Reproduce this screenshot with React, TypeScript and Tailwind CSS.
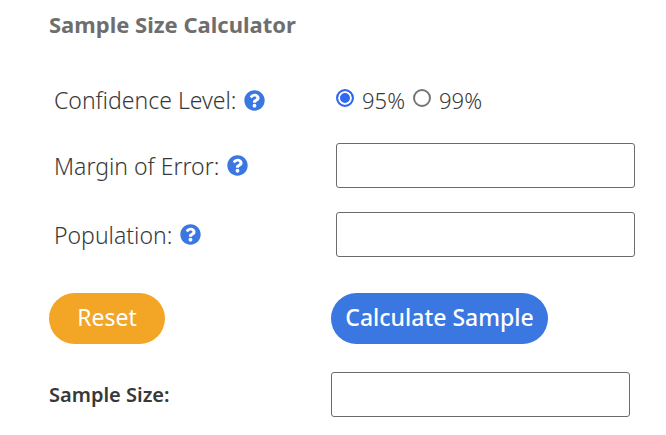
import { useState } from "react";
import type { ReactNode } from "react";
import { FaQuestionCircle } from "react-icons/fa";

function HelpButton({ topic }: { topic: string }) {
  return (
    <button type="button" aria-label={`Help: ${topic}`} className="shrink-0 text-[#3a77e0]">
      <FaQuestionCircle size={21} />
    </button>
  );
}

function LabelCell({ topic, children }: { topic: string; children: ReactNode }) {
  return (
    <div className="flex items-center gap-2 whitespace-nowrap text-[23px] leading-8">
      {children}
      <HelpButton topic={topic} />
    </div>
  );
}

const inputClass =
  "block h-[45px] w-full rounded-[3px] border border-[#6b6b6b] bg-white px-3 text-[22px] outline-none focus:border-[#3a77e0]";

function Radio({ value, checked, onSelect }: { value: string; checked: boolean; onSelect: (value: string) => void }) {
  return (
    <label className="flex items-center gap-2 text-[22px] leading-8">
      <input
        type="radio"
        name="confidence"
        value={value}
        checked={checked}
        onChange={() => onSelect(value)}
        className="mb-1 size-[18px] appearance-none rounded-full border-2 border-[#767676] bg-white checked:border-[#3267f0] checked:bg-[#3267f0] checked:shadow-[inset_0_0_0_2px_white]"
      />
      {value}%
    </label>
  );
}

export default function App() {
  const [confidence, setConfidence] = useState("95");
  const [margin, setMargin] = useState("");
  const [population, setPopulation] = useState("");
  const [result, setResult] = useState("");

  const reset = () => {
    setConfidence("95");
    setMargin("");
    setPopulation("");
    setResult("");
  };

  const calculate = () => {
    const z = confidence === "95" ? 1.96 : 2.576;
    const e = Number(margin) / 100;
    const n = Number(population);
    if (!e) return;
    const base = (z * z * 0.25) / (e * e);
    setResult(String(Math.ceil(n ? base / (1 + (base - 1) / n) : base)));
  };

  return (
    <main className="min-h-screen bg-white pt-2 pr-[31px] pb-[18px] pl-[49px] font-['Noto_Sans',sans-serif] text-[#383838]">
      <h1 className="text-[22px] leading-8 font-bold text-[#6e6e6e]">Sample Size Calculator</h1>
      <form
        onSubmit={(event) => {
          event.preventDefault();
          calculate();
        }}
      >
        <div className="mt-[41px] grid grid-cols-[282px_1fr] items-center gap-y-6 pl-[5px] font-light">
          <LabelCell topic="confidence level">
            <span id="confidence-label">Confidence Level:</span>
          </LabelCell>
          <div role="radiogroup" aria-labelledby="confidence-label" className="flex h-[38px] items-center gap-2">
            <Radio value="95" checked={confidence === "95"} onSelect={setConfidence} />
            <Radio value="99" checked={confidence === "99"} onSelect={setConfidence} />
          </div>
          <LabelCell topic="margin of error">
            <label htmlFor="margin">Margin of Error:</label>
          </LabelCell>
          <input id="margin" className={inputClass} value={margin} onChange={(e) => setMargin(e.target.value)} />
          <LabelCell topic="population">
            <label htmlFor="population">Population:</label>
          </LabelCell>
          <input id="population" className={inputClass} value={population} onChange={(e) => setPopulation(e.target.value)} />
        </div>
        <div className="mt-9 grid grid-cols-[282px_1fr] items-center gap-y-7 pr-[5px]">
          <button type="button" onClick={reset} className="h-[51px] w-[116px] rounded-full bg-[#f3a526] pb-0.5 text-[23px] text-white">
            Reset
          </button>
          <button type="submit" className="h-[51px] w-[217px] rounded-full bg-[#3a77e0] pb-0.5 text-[23px] font-medium whitespace-nowrap text-white">
            Calculate Sample
          </button>
          <label htmlFor="result" className="text-[20px] leading-8 font-semibold">
            Sample Size:
          </label>
          <input id="result" readOnly className={inputClass} value={result} />
        </div>
      </form>
    </main>
  );
}
